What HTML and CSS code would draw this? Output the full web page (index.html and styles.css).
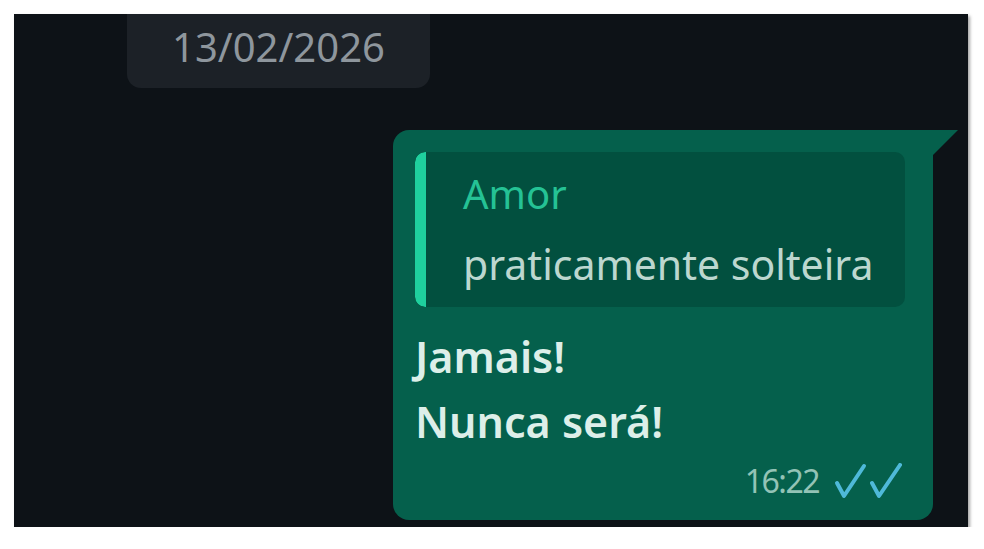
FILE: index.html
```html
<!DOCTYPE html>
<html lang="pt">
<head>
    <meta charset="UTF-8">
    <meta name="viewport" content="width=device-width, initial-scale=1.0">
    <title>Conversa</title>
    <link rel="stylesheet" href="styles.css">
</head>
<body>

    <div class="chat-panel">
        <div class="date-chip">13/02/2026</div>

        <div class="bubble-out">
            <div class="quote">
                <div class="quote-bar"></div>
                <div class="quote-body">
                    <div class="quote-author">Amor</div>
                    <div class="quote-text">praticamente solteira</div>
                </div>
            </div>

            <div class="message-text">Jamais!<br>Nunca será!</div>

            <div class="message-meta">
                <span class="message-time">16:22</span>
                <svg class="ticks" width="68" height="36" viewBox="0 0 68 36">
                    <path d="M3 20 L10 33 L30 3" />
                    <path d="M38 20 L45 33 L66 2" />
                </svg>
            </div>
        </div>
    </div>

</body>
</html>
```

FILE: styles.css
```css
body {
    margin: 0;
    padding: 0;
    background: #ffffff;
    font-family: "Noto Sans", "Open Sans", Arial, sans-serif;
}

.chat-panel {
    margin: 14px 16px 0 14px;
    height: 513px;
    background: #0d1217;
    box-shadow: 2px 2px 3px rgba(0, 0, 0, 0.35);
    overflow: hidden;
}

/* Date chip, top is cut off by the panel edge */
.date-chip {
    width: 303px;
    margin-left: 113px;
    box-sizing: border-box;
    padding: 3px 0 11px;
    background: #1c2127;
    border-radius: 0 0 14px 14px;
    color: #8e969d;
    font-size: 40px;
    line-height: 60px;
    text-align: center;
}

/* Outgoing bubble */
.bubble-out {
    position: relative;
    width: 540px;
    height: 390px;
    margin: 42px 0 0 379px;
    box-sizing: border-box;
    padding: 22px 28px 0 22px;
    background: #05604c;
    border-radius: 16px 0 16px 16px;
}

.bubble-out::after {
    content: "";
    position: absolute;
    top: 0;
    right: -25px;
    width: 25px;
    height: 25px;
    background: #05604c;
    clip-path: polygon(0 0, 100% 0, 0 100%);
}

.quote {
    display: flex;
    height: 155px;
    background: #02503f;
    border-radius: 10px;
    overflow: hidden;
}

.quote-bar {
    width: 11px;
    background: #1fd09e;
    border-radius: 10px 0 0 10px;
}

.quote-body {
    padding: 14px 0 0 37px;
}

.quote-author {
    color: #25c295;
    font-size: 40px;
    line-height: 56px;
}

.quote-text {
    margin-top: 14px;
    color: #bcd7cf;
    font-size: 41px;
    line-height: 56px;
}

.message-text {
    margin-top: 17px;
    color: #ddefe9;
    font-size: 43px;
    font-weight: 600;
    line-height: 65px;
}

.message-meta {
    display: flex;
    justify-content: flex-end;
    align-items: center;
    gap: 15px;
    margin-top: 7px;
    margin-right: 3px;
}

.message-time {
    color: #93c3b6;
    font-size: 32px;
    line-height: 40px;
    letter-spacing: -1.5px;
}

.ticks path {
    fill: none;
    stroke: #4fb9d9;
    stroke-width: 4;
    stroke-linecap: round;
    stroke-linejoin: round;
}
```
